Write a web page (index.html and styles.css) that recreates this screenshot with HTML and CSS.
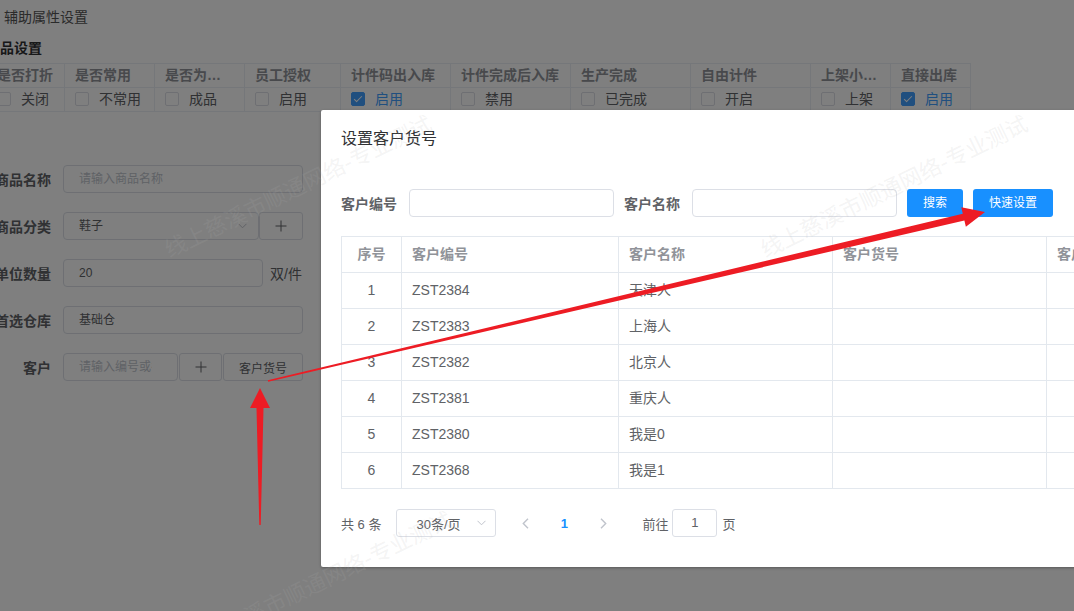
FILE: index.html
```html
<!DOCTYPE html>
<html lang="zh-CN">
<head>
<meta charset="utf-8">
<title>设置客户货号</title>
<link rel="stylesheet" href="styles.css">
</head>
<body>
<div class="page">
  <div class="tab-title">辅助属性设置</div>
  <div class="section-title">商品设置</div>
  <table class="attr-table">
    <colgroup>
      <col style="width:78px"><col style="width:90px"><col style="width:90px"><col style="width:96px"><col style="width:110px">
      <col style="width:120px"><col style="width:120px"><col style="width:120px"><col style="width:80px"><col style="width:80px">
    </colgroup>
    <thead>
      <tr>
        <th>是否打折</th><th>是否常用</th><th><span class="clip">是否为成品库存</span></th><th>员工授权</th><th>计件码出入库</th>
        <th>计件完成后入库</th><th>生产完成</th><th>自由计件</th><th>上架小程序</th><th>直接出库</th>
      </tr>
    </thead>
    <tbody>
      <tr>
        <td><span class="cb"></span><span class="cb-label">关闭</span></td>
        <td><span class="cb"></span><span class="cb-label">不常用</span></td>
        <td><span class="cb"></span><span class="cb-label">成品</span></td>
        <td><span class="cb"></span><span class="cb-label">启用</span></td>
        <td><span class="cb on"></span><span class="cb-label on">启用</span></td>
        <td><span class="cb"></span><span class="cb-label">禁用</span></td>
        <td><span class="cb"></span><span class="cb-label">已完成</span></td>
        <td><span class="cb"></span><span class="cb-label">开启</span></td>
        <td><span class="cb"></span><span class="cb-label">上架</span></td>
        <td><span class="cb on"></span><span class="cb-label on">启用</span></td>
      </tr>
    </tbody>
  </table>

  <div class="form">
    <div class="form-row">
      <div class="form-label">商品名称</div>
      <div class="inp w240"><span class="ph">请输入商品名称</span></div>
    </div>
    <div class="form-row">
      <div class="form-label">商品分类</div>
      <div class="inp select w196"><span>鞋子</span>
        <svg class="chev" width="9" height="6" viewBox="0 0 9 6"><path d="M0.5 0.8 L4.5 4.8 L8.5 0.8" fill="none" stroke="#c0c4cc" stroke-width="1"/></svg>
      </div>
      <div class="btn-plain w44">
        <svg width="12" height="12" viewBox="0 0 12 12"><path d="M6 0.5V11.5M0.5 6H11.5" stroke="#606266" stroke-width="1"/></svg>
      </div>
    </div>
    <div class="form-row">
      <div class="form-label">单位数量</div>
      <div class="inp w200"><span>20</span></div>
      <div class="unit">双/件</div>
    </div>
    <div class="form-row">
      <div class="form-label">首选仓库</div>
      <div class="inp w240"><span>基础仓</span></div>
    </div>
    <div class="form-row">
      <div class="form-label">客户</div>
      <div class="inp w115 cut"><span class="ph">请输入编号或名称</span></div>
      <div class="btn-plain w43 ml1">
        <svg width="12" height="12" viewBox="0 0 12 12"><path d="M6 0.5V11.5M0.5 6H11.5" stroke="#606266" stroke-width="1"/></svg>
      </div>
      <div class="btn-plain w80 ml1 small">客户货号</div>
    </div>
  </div>
</div>

<div class="mask"></div>

<div class="dialog">
  <div class="dlg-head">设置客户货号</div>
  <div class="dlg-body">
    <div class="search">
      <span class="s-label">客户编号</span>
      <div class="s-input"></div>
      <span class="s-label">客户名称</span>
      <div class="s-input"></div>
      <div class="btn-primary w56">搜索</div>
      <div class="btn-primary w80b">快速设置</div>
    </div>
    <table class="dtable">
      <colgroup>
        <col style="width:60px"><col style="width:217px"><col style="width:214px"><col style="width:214px"><col style="width:214px">
      </colgroup>
      <thead>
        <tr><th class="c">序号</th><th>客户编号</th><th>客户名称</th><th>客户货号</th><th>客户备注</th></tr>
      </thead>
      <tbody>
        <tr><td class="c">1</td><td>ZST2384</td><td>天津人</td><td></td><td></td></tr>
        <tr><td class="c">2</td><td>ZST2383</td><td>上海人</td><td></td><td></td></tr>
        <tr><td class="c">3</td><td>ZST2382</td><td>北京人</td><td></td><td></td></tr>
        <tr><td class="c">4</td><td>ZST2381</td><td>重庆人</td><td></td><td></td></tr>
        <tr><td class="c">5</td><td>ZST2380</td><td>我是0</td><td></td><td></td></tr>
        <tr><td class="c">6</td><td>ZST2368</td><td>我是1</td><td></td><td></td></tr>
      </tbody>
    </table>
    <div class="pager">
      <span class="total">共 6 条</span>
      <div class="size-select"><span>30条/页</span>
        <svg width="9" height="6" viewBox="0 0 9 6"><path d="M0.5 0.8 L4.5 4.8 L8.5 0.8" fill="none" stroke="#c0c4cc" stroke-width="1"/></svg>
      </div>
      <div class="pg-btn pg-prev">
        <svg width="7" height="11" viewBox="0 0 7 11"><path d="M6 0.8 L1.3 5.5 L6 10.2" fill="none" stroke="#c0c4cc" stroke-width="1.4"/></svg>
      </div>
      <div class="pg-num">1</div>
      <div class="pg-btn">
        <svg width="7" height="11" viewBox="0 0 7 11"><path d="M1 0.8 L5.7 5.5 L1 10.2" fill="none" stroke="#c0c4cc" stroke-width="1.4"/></svg>
      </div>
      <span class="goto">前往</span>
      <div class="goto-input">1</div>
      <span class="goto-suffix">页</span>
    </div>
  </div>
</div>

<div class="watermarks">
  <div class="wm wm1">线上慈溪市顺通网络-专业测试</div>
  <div class="wm wm2">线上慈溪市顺通网络-专业测试</div>
  <div class="wm wm3">线上慈溪市顺通网络-专业测试</div>
</div>

<svg class="arrows" width="1074" height="611" viewBox="0 0 1074 611">
  <polygon fill="#ed1c24" points="267.82,380.22 962.79,213.64 961.30,207.32 985,212 965.88,226.78 964.39,220.46 268.18,381.78"/>
  <polygon fill="#ed1c24" points="260,388 270,408 263.5,408 260.7,525 259.3,525 256.5,408 250,408"/>
</svg>
</body>
</html>
```

FILE: styles.css
```css
html, body {
  margin: 0;
  padding: 0;
  overflow: hidden;
}
body {
  width: 1074px;
  height: 611px;
  position: relative;
  background: #fff;
  font-family: "Liberation Sans", "Noto Sans CJK SC", sans-serif;
  color: #606266;
}

/* underlying page */
.page {
  margin-left: -14px;
}
.tab-title {
  margin-left: 18px;
  padding-top: 7px;
  line-height: 20px;
  font-size: 14px;
  color: #555;
}
.section-title {
  margin-top: 11px;
  line-height: 20px;
  font-size: 14px;
  font-weight: bold;
  color: #303133;
}
.attr-table {
  margin-top: 5px;
  border-collapse: collapse;
  table-layout: fixed;
  width: 984px;
  font-size: 14px;
}
.attr-table th,
.attr-table td {
  border: 1px solid #ebeef5;
  padding: 0 10px;
  height: 23px;
  line-height: 23px;
  white-space: nowrap;
  overflow: hidden;
  text-overflow: ellipsis;
  text-align: left;
}
.attr-table th {
  color: #909399;
  font-weight: bold;
}
.attr-table .clip {
  display: inline-block;
  max-width: 62px;
  overflow: hidden;
  text-overflow: ellipsis;
  vertical-align: top;
}
.cb {
  display: inline-block;
  position: relative;
  width: 14px;
  height: 14px;
  box-sizing: border-box;
  border: 1px solid #dcdfe6;
  border-radius: 2px;
  background: #fff;
  vertical-align: middle;
  margin-top: -3px;
}
.cb.on {
  background: #409eff;
  border-color: #409eff;
}
.cb.on::after {
  content: "";
  position: absolute;
  left: 4px;
  top: 1px;
  width: 3px;
  height: 7px;
  border: solid #fff;
  border-width: 0 1px 1px 0;
  transform: rotate(45deg);
}
.cb-label {
  margin-left: 10px;
  color: #606266;
}
.cb-label.on {
  color: #409eff;
}

.form {
  margin-top: 53px;
}
.form-row {
  display: flex;
  align-items: center;
  height: 28px;
  margin-bottom: 19px;
}
.form-label {
  width: 77px;
  padding-right: 12px;
  box-sizing: border-box;
  text-align: right;
  font-size: 14px;
  font-weight: bold;
  color: #606266;
}
.inp {
  height: 28px;
  box-sizing: border-box;
  border: 1px solid #dcdfe6;
  border-radius: 4px;
  background: #fff;
  padding: 0 15px;
  font-size: 12px;
  line-height: 26px;
  color: #606266;
  white-space: nowrap;
  overflow: hidden;
}
.inp.cut span {
  display: block;
  width: 73px;
  overflow: hidden;
  white-space: nowrap;
}
.ph {
  color: #c0c4cc;
}
.select {
  display: flex;
  align-items: center;
  justify-content: space-between;
  padding-right: 11px;
}
.w240 { width: 240px; }
.w200 { width: 200px; }
.w196 { width: 196px; }
.w115 { width: 115px; }
.w44 { width: 44px; }
.w43 { width: 43px; }
.w80 { width: 80px; }
.ml1 { margin-left: 1px; }
.unit {
  margin-left: 7px;
  font-size: 14px;
  color: #606266;
}
.btn-plain {
  height: 28px;
  box-sizing: border-box;
  border: 1px solid #dcdfe6;
  border-radius: 3px;
  background: #fff;
  display: flex;
  align-items: center;
  justify-content: center;
  color: #606266;
}
.btn-plain.small {
  font-size: 12px;
}

.mask {
  position: absolute;
  left: 0;
  top: 0;
  width: 1074px;
  height: 611px;
  background: rgba(0, 0, 0, 0.5);
}

/* dialog */
.dialog {
  position: absolute;
  left: 321px;
  top: 110px;
  width: 959px;
  background: #fff;
  border-radius: 2px;
  box-shadow: 0 1px 3px rgba(0, 0, 0, 0.3);
}
.dlg-head {
  padding: 20px 20px 0;
  line-height: 18px;
  font-size: 16px;
  color: #303133;
}
.dlg-body {
  padding: 41px 20px 30px;
}
.search {
  display: flex;
  align-items: center;
  height: 28px;
}
.s-label {
  font-size: 14px;
  font-weight: bold;
  color: #606266;
  margin-right: 12px;
}
.s-input {
  width: 205px;
  height: 28px;
  box-sizing: border-box;
  border: 1px solid #dcdfe6;
  border-radius: 4px;
  margin-right: 10px;
}
.btn-primary {
  height: 28px;
  line-height: 28px;
  background: #1890ff;
  color: #fff;
  border-radius: 3px;
  font-size: 12px;
  text-align: center;
}
.w56 { width: 56px; margin-right: 10px; }
.w80b { width: 80px; }

.dtable {
  margin-top: 19px;
  border-collapse: collapse;
  table-layout: fixed;
  width: 919px;
  font-size: 14px;
}
.dtable th,
.dtable td {
  border: 1px solid #e3e8ee;
  padding: 0 10px;
  height: 35px;
  line-height: 35px;
  text-align: left;
  white-space: nowrap;
  overflow: hidden;
}
.dtable th {
  color: #909399;
  font-weight: bold;
}
.dtable td {
  color: #606266;
}
.dtable .c {
  text-align: center;
}

.pager {
  display: flex;
  align-items: center;
  height: 28px;
  margin-top: 20px;
  font-size: 13px;
  color: #606266;
}
.size-select {
  margin-left: 15px;
  width: 100px;
  height: 28px;
  box-sizing: border-box;
  border: 1px solid #dcdfe6;
  border-radius: 3px;
  display: flex;
  align-items: center;
  justify-content: space-between;
  padding: 0 9px 0 19px;
}
.pg-btn {
  width: 30px;
  height: 28px;
  display: flex;
  align-items: center;
  justify-content: center;
}
.pg-prev {
  margin-left: 14px;
}
.pg-num {
  width: 48px;
  text-align: center;
  font-weight: bold;
  color: #1890ff;
}
.goto {
  margin-left: 24px;
}
.goto-input {
  margin-left: 4px;
  width: 45px;
  height: 28px;
  box-sizing: border-box;
  border: 1px solid #dcdfe6;
  border-radius: 3px;
  text-align: center;
  line-height: 26px;
}
.goto-suffix {
  margin-left: 5px;
}

/* watermarks */
.watermarks {
  position: absolute;
  left: 0;
  top: 0;
  width: 1074px;
  height: 611px;
  overflow: hidden;
  pointer-events: none;
}
.wm {
  position: absolute;
  font-size: 22px;
  line-height: 22px;
  white-space: nowrap;
  color: rgba(180, 180, 180, 0.15);
  font-family: "Noto Sans CJK SC", sans-serif;
  transform: rotate(-26deg);
  transform-origin: 0 100%;
}
.wm1 { left: 170px; top: 237px; }
.wm2 { left: 766px; top: 237px; }
.wm3 { left: 190px; top: 633px; }

.arrows {
  position: absolute;
  left: 0;
  top: 0;
  pointer-events: none;
}
```
